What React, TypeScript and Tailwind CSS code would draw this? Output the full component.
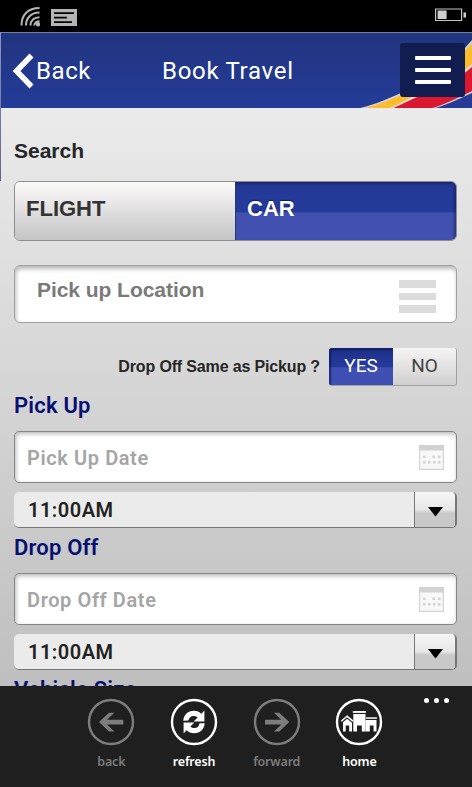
import type { ReactNode } from "react";

const navItems = [
  { label: "back", icon: <BackIcon />, active: false },
  { label: "refresh", icon: <RefreshIcon />, active: true },
  { label: "forward", icon: <ForwardIcon />, active: false },
  { label: "home", icon: <HomeIcon />, active: true },
];

function Ring({ children }: { children: ReactNode }) {
  return (
    <svg viewBox="0 0 48 48" className="h-12 w-12" fill="currentColor">
      <circle cx="24" cy="24" r="22" fill="none" stroke="currentColor" strokeWidth="2.4" />
      {children}
    </svg>
  );
}

function BackIcon() {
  return (
    <Ring>
      <path d="M12 24 22 14.8h5.4L20 21.8h16.3v4.6H20l7.4 7H22z" />
    </Ring>
  );
}

function ForwardIcon() {
  return (
    <Ring>
      <path d="M36.3 24 26.3 14.8h-5.4l7.4 7H12v4.6h16.3l-7.4 7h5.4z" />
    </Ring>
  );
}

function RefreshIcon() {
  return (
    <Ring>
      <path d="M13.3 22.8C13.6 16.8 18 12.8 23.8 12.8c3.2 0 5.6 1 7.6 3l3-3.2v10.8H23.6l4-4c-1.2-1-2.4-1.5-4-1.5-2.8 0-4.6 1.7-5.2 4.7z" />
      <path d="M34.7 25.2C34.4 31.2 30 35.2 24.2 35.2c-3.2 0-5.6-1-7.6-3l-3 3.2V24.6h10.800l-4 4c1.2 1 2.4 1.5 4 1.5 2.8 0 4.6-1.7 5.2-4.9z" />
    </Ring>
  );
}

function HomeIcon() {
  return (
    <Ring>
      <path d="M6.3 23.2 12.1 18.3 18 23.2" fill="none" stroke="currentColor" strokeWidth="1.5" />
      <path d="M8 24.3 12.1 20.8 17 24.8V33.6h-2.800v-6h-3.500v6H8z" />
      <path d="M17.8 13h13.1v1.900H17.800z" />
      <path d="M18.3 16h12.2v17.600h-3.700v-6H22v6h-3.700z" />
      <path d="M31 19.3h10.900v1.500H31z" />
      <path d="M30.5 22h11v11.600h-2.900v-6h-3.800v6h-4.300z" />
    </Ring>
  );
}

function StatusBar() {
  return (
    <div className="flex h-8 justify-between bg-black pl-5 pr-[5px]">
      <div className="flex items-start gap-[11px] pt-[7px]">
        <svg viewBox="0 0 20 20" className="h-5 w-5" fill="none" stroke="#b5b5b5" strokeWidth="2">
          <path d="M1.5 18.5C1.5 8 8 1 19.5 1" />
          <path d="M6 18.5C6 11 11 5.6 19.5 5.6" />
          <path d="M10.5 18.5c0-5 3.500-8.300 9-8.300" />
          <path d="M14.3 18.5c0-2.500 2-4.300 5.200-4.300" />
          <circle cx="18" cy="17.3" r="1.2" fill="#b5b5b5" />
        </svg>
        <svg viewBox="0 0 26 17" className="mt-0.5 h-[17px] w-[26px]">
          <path d="M0 0h26v17H0z" fill="#b5b5b5" />
          <path d="M3 3.200h20v1.800H3zM3 7.700h13v1.800H3zM3 12.200h18v1.800H3z" fill="#000" />
        </svg>
      </div>
      <svg viewBox="0 0 33 14" className="mt-2 h-[14px] w-[33px]">
        <path d="M1.6 1h26v11.500h-26z" fill="none" stroke="#c4c4c4" strokeWidth="1.2" />
        <path d="M3.6 2.500h9v8.500h-9zM29.500 4.500h2.500v5h-2.500z" fill="#cfcfcf" />
      </svg>
    </div>
  );
}

function Header() {
  return (
    <header className="relative flex h-[76px] items-center overflow-hidden border-t border-[#777f9f] bg-gradient-to-b from-[#21347f] to-[#243c98] font-['Roboto',sans-serif] text-2xl text-white">
      <svg viewBox="0 0 112 76" className="absolute right-0 top-0 h-[76px] w-28">
        <path d="M-4 76C14 72 28 66 41 60C68 48 92 31 112 7V76z" fill="#d9d3d6" />
        <path d="M0 76C16 73 29 67 41 62C68 50 92 34 112 10V76z" fill="#fbbd2c" />
        <path d="M27 76C38 72 46 67 54 62.500C76 54 97 44 112 31V76z" fill="#f5d9d4" />
        <path d="M31 76C41 72 48 68 56 64.500C77 56 97 47 112 34V76z" fill="#dc1730" />
        <path d="M68 76C82 73 93 67 112 58V76z" fill="#c9c5dc" />
        <path d="M72 76C84 73 95 68 112 60V76z" fill="#243a94" />
      </svg>
      <button className="flex h-full w-[162px] items-center pl-3">
        <svg viewBox="0 0 22 36" className="h-9 w-[22px]">
          <path d="M19.5 2.500 4.500 18 19.500 33.500" fill="none" stroke="#fff" strokeWidth="5.5" />
        </svg>
        <span className="ml-0.5 tracking-[0.6px]">Back</span>
      </button>
      <h1 className="tracking-[0.7px]">Book Travel</h1>
      <button className="relative mb-0.5 ml-auto mr-[7px] flex h-[54px] w-[65px] flex-col items-center justify-center gap-2 rounded-[3px] bg-[#111d4e]">
        <span className="h-1 w-9 rounded-[1px] bg-white" />
        <span className="h-1 w-9 rounded-[1px] bg-white" />
        <span className="h-1 w-9 rounded-[1px] bg-white" />
      </button>
    </header>
  );
}

function CalendarIcon() {
  return (
    <svg viewBox="0 0 25 25" className="h-[25px] w-[25px]" fill="#d2d2d2">
      <path d="M.6.600h23.800v23.800H.600z" fill="#f8f8f8" stroke="#d4d4d4" strokeWidth="1.2" />
      <path d="M0 0h25v5.500H0z" />
      <path d="M4 10.500h2.500V13H4zM13.500 10.500H16V13h-2.500zM19 10.500h2.500V13H19zM4 16h2.500v2.500H4zM9 16h2.500v2.500H9zM14 16h2.500v2.500H14zM19 16h2.500v2.500H19z" />
    </svg>
  );
}

function SectionTitle({ children }: { children: ReactNode }) {
  return (
    <h2 className="h-[45px] font-['Roboto',sans-serif] text-[22px] font-semibold leading-[39px] tracking-[0.2px] text-[#050f72]">
      {children}
    </h2>
  );
}

function DateTimeSection({ title, placeholder }: { title: string; placeholder: string }) {
  return (
    <section>
      <SectionTitle>{title}</SectionTitle>
      <div className="flex h-[52px] items-center justify-between rounded-[5px] border border-[#858585] bg-white pl-3 pr-3 font-['Roboto',sans-serif] text-[20px] font-semibold text-[#a5a5a5] shadow-[inset_1px_2px_4px_rgba(0,0,0,0.28)]">
        <span className="pt-px tracking-[0.6px]">{placeholder}</span>
        <CalendarIcon />
      </div>
      <div className="mt-[9px] flex h-9 overflow-hidden rounded-[5px] border-b-[1.5px] border-r-2 border-[#777] bg-[#ebebeb] font-['Roboto',sans-serif] text-[20px] font-semibold text-[#222]">
        <span className="flex-1 pl-[14px] leading-[36px] tracking-[0.5px]">11:00AM</span>
        <span className="flex w-[41px] items-center justify-center border-l border-[#777] bg-linear-to-b from-[#f7f7f7] from-0% via-[#e7e7e7] via-50% to-[#c9c9c9] to-60%">
          <svg viewBox="0 0 15 10" className="mt-1 h-[10px] w-[15px]">
            <path d="M0 0h15L7.5 9.500z" />
          </svg>
        </span>
      </div>
    </section>
  );
}

export default function App() {
  return (
    <div className="relative flex h-[787px] w-[472px] flex-col overflow-hidden bg-black font-['Liberation_Sans',Arial,sans-serif]">
      <StatusBar />
      <Header />
      <main className="h-[578px] overflow-hidden bg-gradient-to-b from-[#ebebeb] to-[#bfbfbf] pl-[14px] pr-[15px]">
        <h2 className="h-[73px] pt-[31px] text-[21px] font-bold leading-6 text-[#262626]">Search</h2>
        <div className="flex h-[60px] overflow-hidden rounded-md border border-[#8e8e8e] text-[22px] font-bold">
          <button className="flex w-[220px] bg-gradient-to-b from-[#fdfafa] to-[#c5c5c5] pl-[11px] pt-[10px] leading-[33px] text-[#333]">
            FLIGHT
          </button>
          <button className="flex flex-1 border-l border-[#28387c] bg-linear-to-b from-[#233895] from-0% via-[#253b9b] via-52% to-[#4251b0] to-53% pl-[11px] pt-[10px] leading-[33px] text-white shadow-[inset_-2px_2px_3px_rgba(10,20,80,0.5)] [text-shadow:0_-1px_1px_#101c5c]">
            CAR
          </button>
        </div>

        <div className="mt-6 flex h-[58px] justify-between rounded-md border border-[#a0a0a0] bg-white pl-[22px] pr-[20px] text-[21px] font-bold text-[#7a7a7a] shadow-[inset_1px_3px_4px_rgba(0,0,0,0.28)]">
          <span className="pt-3 leading-6 tracking-[-0.05px]">Pick up Location</span>
          <div className="mt-[14px] flex w-[37px] flex-col gap-[5px]">
            <span className="h-[7.5px] bg-[#dcdcdc]" />
            <span className="h-[7.5px] bg-[#dcdcdc]" />
            <span className="h-[7.5px] bg-[#dcdcdc]" />
          </div>
        </div>

        <div className="mt-6 flex h-[39px] items-center justify-end gap-[9px]">
          <span className="text-base font-bold tracking-[-0.15px] text-[#262626]">
            Drop Off Same as Pickup ?
          </span>
          <div className="flex h-[38px] w-32 overflow-hidden rounded-[3px] border-b border-r border-[#a0a0a0] font-['Roboto',sans-serif] text-[19px] leading-9">
            <span className="w-16 bg-linear-to-b from-[#1d2f86] from-0% via-[#253b9d] via-52% to-[#3f4fb3] to-53% text-center text-white shadow-[inset_2px_2px_2px_rgba(10,20,80,0.6)]">
              YES
            </span>
            <span className="flex-1 bg-gradient-to-b from-[#f5f5f5] to-[#d0d0d0] text-center text-[#444]">
              NO
            </span>
          </div>
        </div>

        <DateTimeSection title="Pick Up" placeholder="Pick Up Date" />
        <DateTimeSection title="Drop Off" placeholder="Drop Off Date" />
        <SectionTitle>Vehicle Size</SectionTitle>
      </main>

      {/* app bar */}
      <nav className="relative flex flex-1 bg-[#1f1f1f] pl-[70px] pt-3">
        {navItems.map((item) => (
          <div
            key={item.label}
            className={`flex w-[82.7px] flex-col items-center ${item.active ? "text-white" : "text-[#7d7d7d]"}`}
          >
            {item.icon}
            <span className="mt-[7px] font-['Noto_Sans',sans-serif] text-[12.5px] font-semibold leading-[18px] tracking-[-0.2px]">
              {item.label}
            </span>
          </div>
        ))}
        <div className="absolute right-[23px] top-3 flex gap-[5px]">
          <span className="h-[5px] w-[5px] rounded-full bg-white" />
          <span className="h-[5px] w-[5px] rounded-full bg-white" />
          <span className="h-[5px] w-[5px] rounded-full bg-white" />
        </div>
      </nav>

      {/* hairline down the left edge of the page */}
      <div className="absolute left-0 top-8 h-[149px] w-px bg-gradient-to-b from-[#8a96c8] to-[#66648c]" />
    </div>
  );
}
